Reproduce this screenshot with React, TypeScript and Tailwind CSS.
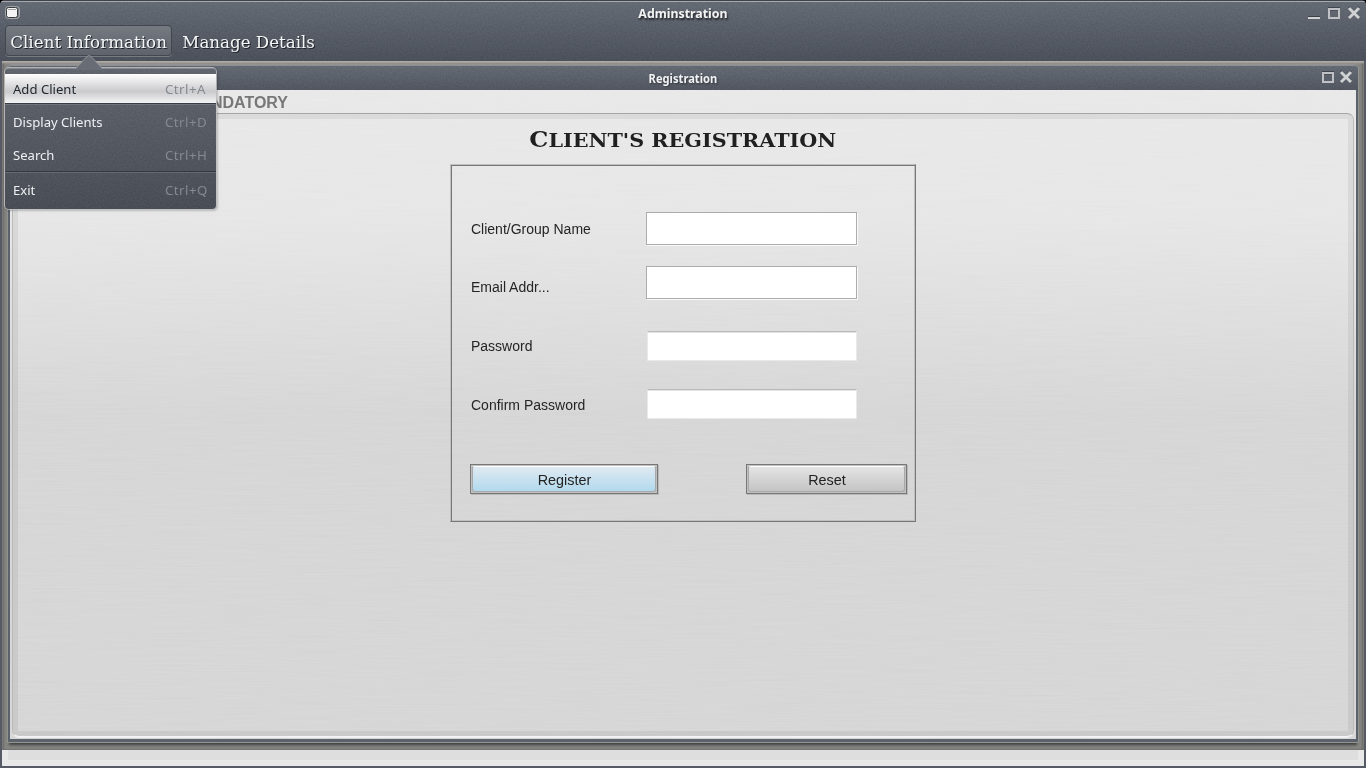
import React from "react";

const ui = "font-['Noto_Sans','Open_Sans',sans-serif]";
const arial = "font-['Liberation_Sans',Arial,sans-serif]";

function Grain({ id, freq, className }: { id: string; freq: string; className: string }) {
  return (
    <svg aria-hidden="true" className={`pointer-events-none absolute inset-0 h-full w-full mix-blend-soft-light ${className}`}>
      <filter id={id} x="0" y="0" width="100%" height="100%" colorInterpolationFilters="sRGB">
        <feTurbulence type="fractalNoise" baseFrequency={freq} numOctaves={2} seed={4} />
        <feColorMatrix type="saturate" values="0" />
        <feComponentTransfer>
          <feFuncA type="linear" slope={0} intercept={1} />
        </feComponentTransfer>
      </filter>
      <rect width="100%" height="100%" filter={`url(#${id})`} />
    </svg>
  );
}

function MaxIcon() {
  return (
    <svg className="h-3.5 w-3.5" viewBox="0 0 14 14" fill="none" shapeRendering="crispEdges">
      <path d="M1 1.5H13" stroke="#3f434b" />
      <rect x="2" y="3" width="10" height="9" stroke="#bfc1c4" strokeWidth="2" />
      <path d="M3 4.5H11" stroke="#4b4f57" />
    </svg>
  );
}

function CloseIcon() {
  return (
    <svg className="h-3.5 w-3.5" viewBox="0 0 14 14" fill="none">
      <path d="M2 1L12 11M12 1L2 11" stroke="#343840" strokeWidth="2.4" />
      <path d="M2 2L12 12M12 2L2 12" stroke="#cfd1d3" strokeWidth="3" />
    </svg>
  );
}

function MenuRow({ label, keys, className }: { label: string; keys: string; className: string }) {
  return (
    <div className={`flex items-center justify-between pl-2 ${className}`}>
      <span>{label}</span>
      <span className="w-[51px] text-[13.3px] tracking-[0.45px] whitespace-nowrap text-[#858990]">{keys}</span>
    </div>
  );
}

function Menu() {
  return (
    <div className={`absolute left-[5px] top-[68px] z-20 h-[141px] w-[211px] rounded-[4px] border-t border-[#858a91] bg-linear-to-b from-[#60656e] to-[#494d56] text-[13.1px] leading-[18px] text-[#eef0f2] shadow-[0_0_0_1px_#c6c6c6cc,1px_1px_3px_#0006] ${ui}`}>
      <Grain id="menuGrain" freq="0.6" className="rounded-[4px] opacity-[0.2]" />
      <svg className="absolute -top-[15px] left-[70px] h-[16px] w-[28px]" viewBox="0 0 28 16">
        <path d="M0 16L12 2.5Q14 .5 16 2.5L28 16Z" fill="#686d75" />
        <path d="M0 15L12 2.5Q14 .5 16 2.5L28 15" fill="none" stroke="#90949b" />
      </svg>
      <div className="relative flex flex-col pt-[5px]">
        <MenuRow label="Add Client" keys="Ctrl+A" className="h-[29px] bg-linear-to-b from-white via-[#cacacd] via-60% to-[#f4f4f6] text-[#222930]" />
        <div className="h-px bg-[#383c44]" />
        <div className="h-px bg-[#70757d]" />
        <MenuRow label="Display Clients" keys="Ctrl+D" className="h-[34px]" />
        <MenuRow label="Search" keys="Ctrl+H" className="h-[32px]" />
        <div className="h-px bg-[#343840]" />
        <div className="h-px bg-[#656a72]" />
        <MenuRow label="Exit" keys="Ctrl+Q" className="h-[34px]" />
      </div>
    </div>
  );
}

function Field({ label, className, boxed, fieldClass }: { label: string; className: string; boxed: boolean; fieldClass: string }) {
  return (
    <div className={`flex ${className}`}>
      <span className="w-[175px] text-[14px] leading-[34px] text-[#252525]">{label}</span>
      <input
        className={
          boxed
            ? `h-[33px] w-[211px] border border-[#acacac] bg-white shadow-[1px_1px_0_#fafafa] outline-none ${fieldClass}`
            : `ml-px h-[30px] w-[210px] border border-[#e9e9e9] border-t-[#b9b9b9] bg-white shadow-[inset_0_1px_0_#e4e4e4] outline-none ${fieldClass}`
        }
      />
    </div>
  );
}

function ActionButton({ label, className, face }: { label: string; className: string; face: string }) {
  return (
    <button className={`flex h-[30px] border border-[#777] bg-[#c0c0c0] p-px shadow-[1px_1px_0_#b9b9b9] ${className}`}>
      <span className={`flex h-[26px] w-full items-center justify-center rounded-[3px] border border-[#a7a9ab] border-t-white pt-[3px] pl-px text-[14.4px] text-[#222] ${face}`}>{label}</span>
    </button>
  );
}

export default function App() {
  return (
    <div className="h-[768px] w-[1366px] overflow-hidden bg-black">
      <div className={`relative flex h-full flex-col overflow-hidden rounded-t-[5px] bg-[#555a65] px-[2px] pb-[2px] ${arial}`}>
        <header className="relative -mx-[2px] h-[61px] border-t border-[#3e424a] bg-linear-to-b from-[#656b75] to-[#4b505a]">
          <Grain id="headGrain" freq="0.6" className="opacity-[0.2]" />
          <div className="relative h-[24px] border-t border-[#a6a9ae]">
            <div className="flex h-[23px] items-center justify-between px-[5px]">
              <svg className="-mt-[2px] h-[14px] w-[15px]" viewBox="0 0 15 14">
                <rect x=".5" y=".5" width="14" height="12" rx="3" fill="#777b82" stroke="#a1a4a9" />
                <rect x="1.5" y="1.5" width="11" height="10" rx="2" fill="#f4f4f4" stroke="#373a3d" />
                <path d="M3 3.5H11" stroke="#9c9e9f" />
              </svg>
              <div className="-mt-[2px] flex gap-[6px]">
                <svg className="h-3.5 w-3.5" viewBox="0 0 14 14" shapeRendering="crispEdges">
                  <path d="M1 10H13V11H1Z" fill="#3b3f47" />
                  <path d="M1 11H13V13H1Z" fill="#d0d2d4" />
                </svg>
                <MaxIcon />
                <CloseIcon />
              </div>
            </div>
            <h1 className={`absolute inset-x-0 top-[2px] text-center text-[13px] leading-[18px] font-bold text-[#f4f4f4] [text-shadow:1px_2px_2px_#202328] ${ui}`}>
              <span className="inline-block scale-x-[0.95]">Adminstration</span>
            </h1>
          </div>
          <nav className="relative flex pl-[5px] font-['Century_Schoolbook','DejaVu_Serif',serif] text-[17px] text-[#f5f6f7] [text-shadow:1px_1px_0_#20242a]">
            <div className="flex h-[31px] w-[167px] items-center justify-center rounded-[4px] border border-[#434750] bg-linear-to-b from-[#757a81] to-[#5e636c] pt-[4px] shadow-[0_1px_0_#777b82]">
              <span className="whitespace-nowrap scale-x-[0.985]">Client Information</span>
            </div>
            <div className="ml-[9px] flex h-[31px] w-[136px] items-center justify-center pt-[4px]">
              <span className="whitespace-nowrap scale-x-[0.98]">Manage Details</span>
            </div>
          </nav>
        </header>

        <main className="h-[689px] bg-[#858582] px-[6px] pt-[4px] shadow-[inset_0_2px_2px_#b0aca6,inset_2px_0_2px_#666,inset_-2px_0_2px_#666]">
          <section className="relative flex h-[677px] flex-col rounded-t-[4px] bg-[#5c626c] px-[2px] pb-[3px] shadow-[0_0_0_1px_#93938f,0_4px_3px_-1px_#3e403e]">
            <div className="relative -mx-[2px] h-[25px] overflow-hidden rounded-t-[4px] border-t border-[#8b8f95] bg-linear-to-b from-[#646a73] to-[#515660]">
              <Grain id="innerGrain" freq="0.6" className="opacity-[0.2]" />
              <h2 className={`relative text-center text-[12px] leading-[25px] font-bold text-[#f1f2f3] [text-shadow:1px_1px_2px_#343840] ${ui}`}>
                <span className="inline-block scale-x-[0.93]">Registration</span>
              </h2>
              <div className="absolute right-[5px] top-[4px] flex gap-[4px]">
                <MaxIcon />
                <CloseIcon />
              </div>
            </div>
            <div className="relative flex flex-1 flex-col bg-linear-to-b from-[#e9e9e9] from-0% via-[#e7e7e7] via-20% to-[#d7d7d7] to-50% px-[2px] pb-[2px]">
              <Grain id="metal" freq="0.015 0.7" className="opacity-[0.14]" />
              <div className="relative flex h-[23px] w-[276px] justify-end text-[16px] leading-[25px] font-bold text-[#777]">
                <span>NDATORY</span>
              </div>
              <div className="relative flex-1 rounded-[7px] border border-[#bababa] border-t-[#a4a7a5] border-b-[#f4f4f4] shadow-[inset_0_0_0_5px_#0000000f,0_1px_0_#eee]">
                <h3 className="h-[50px] pt-[9px] text-center font-['Copperplate_Gothic_Bold','DejaVu_Serif',serif] text-[19px] leading-[34px] font-bold text-[#202020]">
                  <span className="inline-block scale-x-[1.09] whitespace-nowrap uppercase">
                    <span className="text-[22px] leading-none">C</span>lient's registration
                  </span>
                </h3>
                <form className="mx-auto h-[358px] w-[466px] border border-[#c0c0c0] border-r-[#777] border-b-[#777] pt-[47px] pr-[19px] pl-[20px] shadow-[inset_1px_1px_0_#777,inset_-1px_-1px_0_#c0c0c0]">
                  <Field label="Client/Group Name" boxed className="h-[54px]" fieldClass="" />
                  <Field label="Email Addr..." boxed className="h-[61px] [&>span]:pt-[4px]" fieldClass="" />
                  <Field label="Password" boxed={false} className="h-[59px] [&>span]:pt-[2px]" fieldClass="mt-[4px]" />
                  <Field label="Confirm Password" boxed={false} className="h-[78px] [&>span]:pt-[2px]" fieldClass="mt-[3px]" />
                  <div className="-mr-[11px] flex justify-between">
                    <ActionButton label="Register" className="-ml-px w-[188px]" face="bg-linear-to-b from-[#dfeaf1] to-[#b2d9ee]" />
                    <ActionButton label="Reset" className="w-[161px]" face="bg-linear-to-b from-[#e4e4e4] to-[#c4c4c4]" />
                  </div>
                </form>
              </div>
            </div>
          </section>
        </main>
        <footer className="h-[16px] bg-[#e8e8e8] px-[6px] pb-[6px]">
          <div className="h-[10px] bg-[#dedede]" />
        </footer>
        <Menu />
      </div>
    </div>
  );
}
